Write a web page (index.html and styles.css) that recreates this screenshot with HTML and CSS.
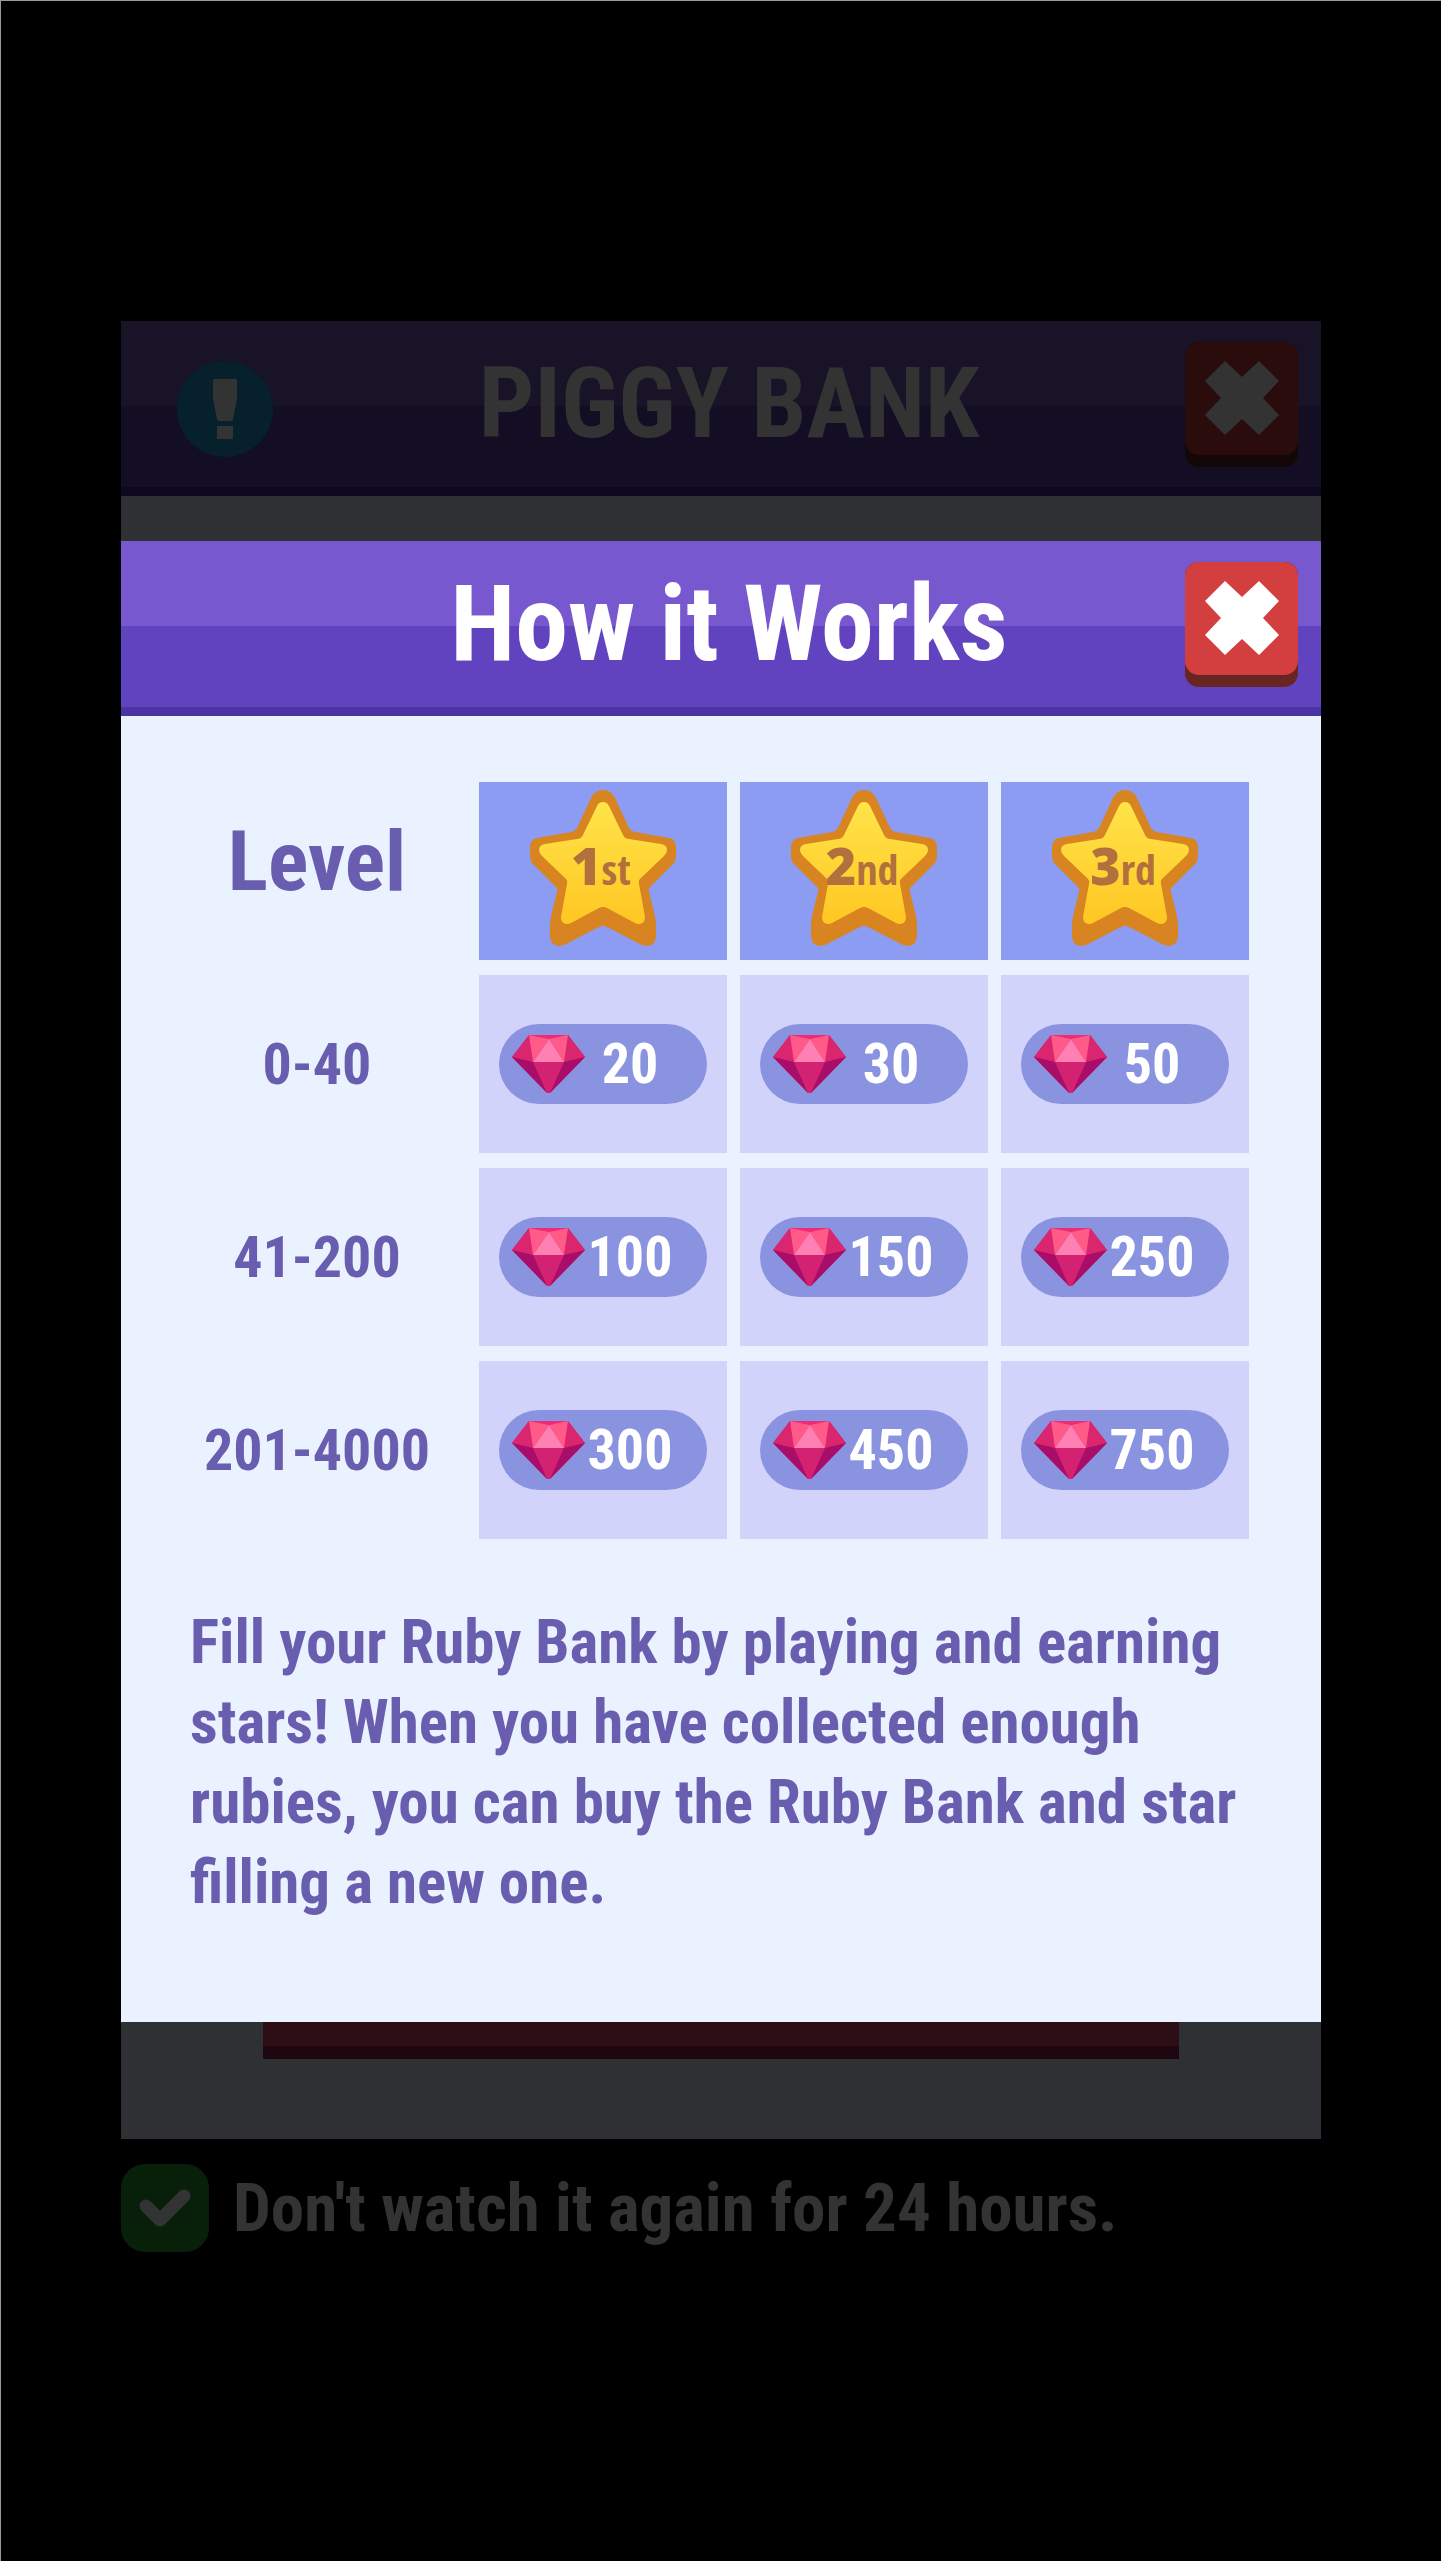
FILE: index.html
```html
<!DOCTYPE html>
<html lang="en">
<head>
<meta charset="utf-8">
<meta name="viewport" content="width=device-width, initial-scale=1">
<title>Piggy Bank – How it Works</title>
<link rel="stylesheet" href="styles.css">
</head>
<body>
<svg class="sprite" aria-hidden="true">
  <defs>
    <linearGradient id="gold" x1="0" y1="0" x2="0" y2="1">
      <stop offset="0" stop-color="#ffe44a"/>
      <stop offset="1" stop-color="#ffc722"/>
    </linearGradient>
    <symbol id="star" viewBox="0 0 146 156">
      <path fill="#d88420" d="M73 0Q81 0 85 8L99 38Q101 41 105 42L139 48Q146 50 146 57V66Q146 71 143 74L121 96Q118 98 119 102L125 126Q126 131 126 138V146Q126 155 117 156Q112 156 108 153L77 137Q73 135 69 137L38 153Q34 156 29 156Q20 155 20 146V138Q20 131 21 126L27 102Q28 98 25 96L3 74Q0 71 0 66V57Q0 50 7 48L41 42Q45 41 47 38L61 8Q65 0 73 0Z"/>
      <path fill="url(#gold)" d="M73 12Q77 12 79 16L93 45Q95 49 99 49L131 54Q137 55 137 60Q137 63 134 66L111 88Q108 90 109 94L115 127Q115 134 109 134Q107 134 105 133L77 118Q73 116 69 118L41 133Q39 134 37 134Q31 134 31 127L37 94Q38 90 35 88L12 66Q9 63 9 60Q9 55 15 54L47 49Q51 49 53 45L67 16Q69 12 73 12Z"/>
    </symbol>
    <symbol id="ruby" viewBox="0 0 73 58">
      <path fill="#d42272" d="M17 0H56L73 22L38 58H35L0 22Z"/>
      <path fill="#d9266e" d="M17 0L0 22L21 27ZM56 0L73 22L52 27Z"/>
      <path fill="#ef2a76" d="M17 0H56L37 4Z"/>
      <path fill="#ff5a88" d="M17 0L37 4L21 27ZM56 0L37 4L52 27Z"/>
      <path fill="#ff80b2" d="M37 4L21 27H52Z"/>
      <path fill="#a80d69" d="M0 22L21 27L35 58ZM73 22L52 27L38 58Z"/>
    </symbol>
    <symbol id="cross" viewBox="0 0 74 74">
      <path fill="currentColor" d="M20 0L37 16L54 0L74 20L58 37L74 54L54 74L37 58L20 74L0 54L16 37L0 20Z"/>
    </symbol>
  </defs>
</svg>

<main class="stage">
  <div class="layers">
    <section class="bank" aria-label="Piggy Bank">
      <header class="bar bar-dim">
        <svg class="info" viewBox="0 0 96 96" aria-hidden="true">
          <circle cx="48" cy="48" r="48" fill="#06202c"/>
          <path fill="#333" d="M37 18H59Q60 18 60 20V38L56 58Q56 60 54 60H42Q40 60 40 58L36 38V20Q36 18 37 18ZM40 65H56V78H40Z"/>
        </svg>
        <h2 class="title title-caps">PIGGY BANK</h2>
        <button class="close" type="button" aria-label="Close Piggy Bank"><svg class="cross" aria-hidden="true"><use href="#cross"/></svg></button>
      </header>
      <div class="bank-body">
        <button class="buy" type="button" aria-label="Buy"></button>
      </div>
    </section>

    <section class="modal" role="dialog" aria-labelledby="how">
      <header class="bar">
        <h1 class="title" id="how">How it Works</h1>
        <button class="close" type="button" aria-label="Close"><svg class="cross" aria-hidden="true"><use href="#cross"/></svg></button>
      </header>
      <div class="modal-body">
        <table class="rewards">
          <thead>
            <tr>
              <th class="level-head" scope="col">Level</th>
              <th class="place" scope="col"><svg class="star" viewBox="0 0 146 156"><use href="#star"/><text class="rank" x="71" y="95">1<tspan class="suffix">st</tspan></text></svg></th>
              <th class="place" scope="col"><svg class="star" viewBox="0 0 146 156"><use href="#star"/><text class="rank" x="71" y="95">2<tspan class="suffix">nd</tspan></text></svg></th>
              <th class="place" scope="col"><svg class="star" viewBox="0 0 146 156"><use href="#star"/><text class="rank" x="71" y="95">3<tspan class="suffix">rd</tspan></text></svg></th>
            </tr>
          </thead>
          <tbody>
            <tr>
              <th class="level" scope="row">0-40</th>
              <td><div class="pill"><svg class="ruby" aria-hidden="true"><use href="#ruby"/></svg><span class="amount">20</span></div></td>
              <td><div class="pill"><svg class="ruby" aria-hidden="true"><use href="#ruby"/></svg><span class="amount">30</span></div></td>
              <td><div class="pill"><svg class="ruby" aria-hidden="true"><use href="#ruby"/></svg><span class="amount">50</span></div></td>
            </tr>
            <tr>
              <th class="level" scope="row">41-200</th>
              <td><div class="pill"><svg class="ruby" aria-hidden="true"><use href="#ruby"/></svg><span class="amount">100</span></div></td>
              <td><div class="pill"><svg class="ruby" aria-hidden="true"><use href="#ruby"/></svg><span class="amount">150</span></div></td>
              <td><div class="pill"><svg class="ruby" aria-hidden="true"><use href="#ruby"/></svg><span class="amount">250</span></div></td>
            </tr>
            <tr>
              <th class="level" scope="row">201-4000</th>
              <td><div class="pill"><svg class="ruby" aria-hidden="true"><use href="#ruby"/></svg><span class="amount">300</span></div></td>
              <td><div class="pill"><svg class="ruby" aria-hidden="true"><use href="#ruby"/></svg><span class="amount">450</span></div></td>
              <td><div class="pill"><svg class="ruby" aria-hidden="true"><use href="#ruby"/></svg><span class="amount">750</span></div></td>
            </tr>
          </tbody>
        </table>
        <p class="note">Fill your Ruby Bank by playing and earning stars! When you have collected enough rubies, you can buy the Ruby Bank and star filling a new one.</p>
      </div>
    </section>
  </div>

  <label class="snooze" for="snooze">
    <span class="tick">
      <input class="tick-box" type="checkbox" id="snooze" checked>
      <svg class="tick-mark" viewBox="0 0 88 88" aria-hidden="true"><path fill="none" stroke="#333" stroke-width="13" stroke-linecap="round" stroke-linejoin="round" d="M25 42L39 56L63 32"/></svg>
    </span>
    <span>Don't watch it again for 24 hours.</span>
  </label>
</main>
</body>
</html>
```
FILE: styles.css
```css
* {
  box-sizing: border-box;
}

html {
  background: #000;
}

body {
  margin: 0;
  min-height: 100vh;
  border-top: 1px solid #999;
  border-left: 1px solid #999;
  background: #000;
  font-family: "Roboto Condensed", "Open Sans Condensed", Roboto, sans-serif;
  font-weight: 700;
}

.sprite {
  position: absolute;
  width: 0;
  height: 0;
}

.stage {
  max-width: 1200px;
  margin: 0 auto;
  padding: 320px 0;
}

/* The dimmed bank and the dialog share one grid cell. */
.layers {
  display: grid;
}

.bank,
.modal {
  grid-area: 1 / 1;
}

.bank {
  display: flex;
  flex-direction: column;
}

.bank-body {
  flex: 1;
  display: flex;
  align-items: flex-end;
  justify-content: center;
  padding: 0 142px 80px;
  background: #2f3033;
}

.buy {
  flex: 1;
  height: 120px;
  border: 0;
  border-bottom: 13px solid #1f070f;
  background: #2d0e15;
}

.bar {
  display: grid;
  grid-template-columns: 96px 1fr 113px;
  align-items: center;
  height: 175px;
  padding: 0 23px 0 56px;
  border-bottom: 9px solid #4a33a3;
  background: linear-gradient(#7758cf 85px, #6243bf 85px);
  color: #fff;
}

.bar-dim {
  border-bottom-color: #0d0820;
  background: linear-gradient(#191328 85px, #140e24 85px);
  color: #333;
}

.info {
  align-self: end;
  width: 96px;
  height: 96px;
  margin-bottom: 30px;
}

.title {
  grid-column: 2;
  margin: 0;
  font-size: 106px;
  line-height: 120px;
  font-weight: 700;
  text-align: center;
  white-space: nowrap;
}

.title-caps {
  font-size: 98px;
}

.close {
  display: grid;
  place-items: center;
  height: 125px;
  padding: 0;
  border: 0;
  border-bottom: 12px solid #692424;
  border-radius: 14px;
  background: #692424;
  color: inherit;
  position: relative;
  isolation: isolate;
}

.close::before {
  content: "";
  position: absolute;
  inset: 0;
  z-index: -1;
  border-radius: 14px;
  background: #d33e3f;
}

.bar-dim .close {
  border-bottom-color: #140708;
  background: #140708;
}

.bar-dim .close::before {
  background: #2a0c0d;
}

.cross {
  width: 74px;
  height: 74px;
}

.modal {
  margin: 220px 0 117px;
  background: #eaf1ff;
  color: #685dae;
}

.modal-body {
  padding: 51px 59px 100px 34px;
}

.rewards {
  width: 100%;
  table-layout: fixed;
  border-collapse: separate;
  border-spacing: 13px 15px;
}

.rewards th,
.rewards td {
  height: 178px;
  padding: 0;
  text-align: center;
}

.rewards td {
  background: #d1d3fb;
}

.rewards .level-head {
  width: 298px;
  padding-bottom: 20px;
  font-size: 84px;
}

.rewards .level {
  font-size: 58px;
}

.rewards .place {
  background: #8d9cf3;
}

.star {
  display: block;
  width: 146px;
  height: 156px;
  margin: 0 auto 6px;
}

.rank {
  fill: #b2703d;
  font: 800 52px "Open Sans", sans-serif;
  text-anchor: middle;
}

.suffix {
  font: 700 42px "Open Sans Condensed", "Open Sans", sans-serif;
}

.pill {
  display: flex;
  align-items: center;
  width: 208px;
  height: 80px;
  margin: 0 auto;
  padding: 0 32px 0 13px;
  border-radius: 40px;
  background: #8993e0;
  color: #fff;
}

.ruby {
  flex: none;
  width: 73px;
  height: 58px;
}

.amount {
  flex: 1;
  font-size: 56px;
  line-height: 80px;
}

.note {
  margin: 48px 0 0;
  padding-left: 35px;
  font-size: 61px;
  line-height: 80px;
}

.snooze {
  display: flex;
  align-items: center;
  gap: 24px;
  margin-top: 25px;
  color: #333;
  font-size: 67px;
  line-height: 88px;
}

.tick {
  display: grid;
  flex: none;
}

.tick-box,
.tick-mark {
  grid-area: 1 / 1;
  width: 88px;
  height: 88px;
  margin: 0;
}

.tick-box {
  appearance: none;
  border-radius: 24px;
  background: #08200a;
}

.tick-mark {
  pointer-events: none;
  visibility: hidden;
}

.tick-box:checked + .tick-mark {
  visibility: visible;
}
```
